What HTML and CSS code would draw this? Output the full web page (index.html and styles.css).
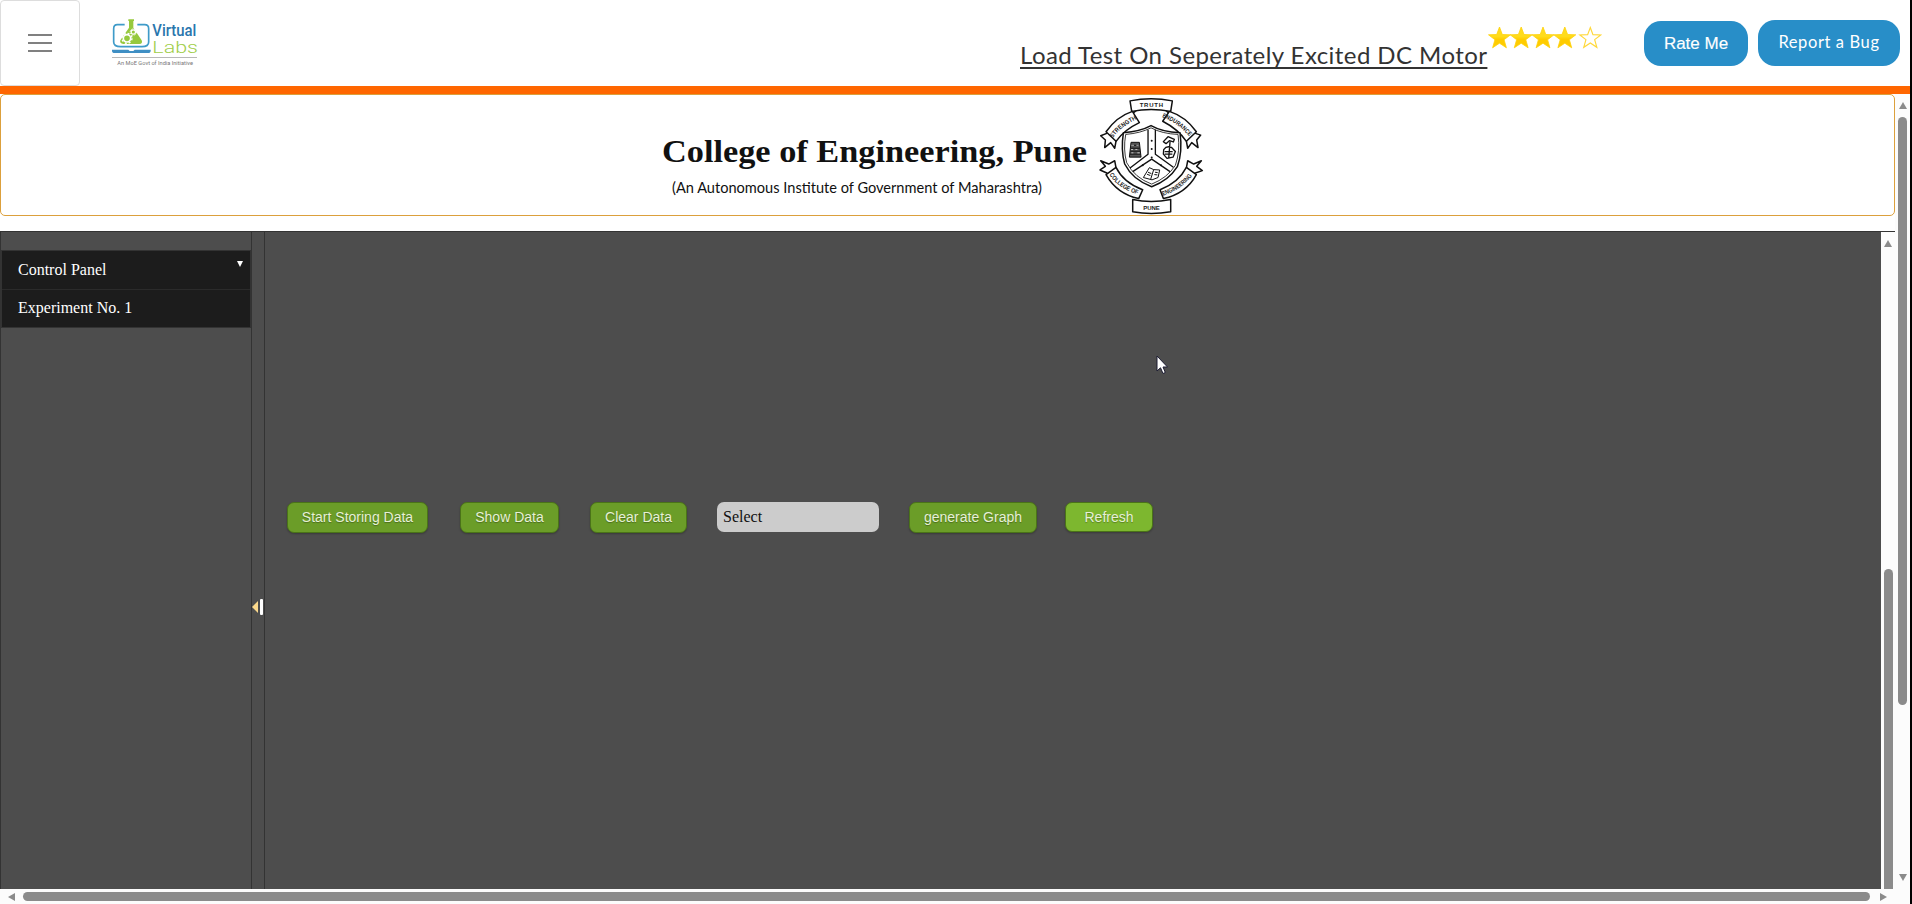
FILE: index.html
```html
<!DOCTYPE html>
<html lang="en">
<head>
<meta charset="utf-8">
<title>Virtual Labs</title>
<link rel="stylesheet" href="styles.css">
</head>
<body>
<div class="page">
  <header class="header">
    <button class="menu" aria-label="Menu"><span></span><span></span><span></span></button>
    <svg class="brand" viewBox="330 51 270 150">
      <path d="M374 74H352Q341 74 341 86V126Q341 140 362 140H426Q446 140 446 126V86Q446 74 434 74H412" fill="none" stroke="#3f9bc9" stroke-width="5"/>
      <path d="M385 58H402V63H400V83L425 121Q429 132 418 132H370Q358 131 361 121L387 83V63H385Z" fill="#96c93d"/>
      <circle cx="381" cy="115" r="11" fill="none" stroke="#fff" stroke-width="5"/>
      <circle cx="381" cy="115" r="15" fill="none" stroke="#fff" stroke-width="4" stroke-dasharray="6 5.8"/>
      <circle cx="400" cy="96" r="6.500" fill="none" stroke="#fff" stroke-width="3.500"/>
      <circle cx="400" cy="96" r="9.500" fill="none" stroke="#fff" stroke-width="3" stroke-dasharray="4 3.460"/>
      <path d="M336 149H385L389 153H400L404 149H452V152Q452 159 444 159H344Q336 159 336 152Z" fill="#3f8fc4"/>
      <text class="brand-virtual" x="457" y="109" textLength="132" lengthAdjust="spacingAndGlyphs">Virtual</text>
      <text class="brand-labs" x="457" y="158" textLength="137" lengthAdjust="spacingAndGlyphs">Labs</text>
      <path d="M336 172.500H591" stroke="#aaa" stroke-width="2.500"/>
      <text class="brand-tag" x="352" y="194" textLength="227" lengthAdjust="spacingAndGlyphs">An MoE Govt of India Initiative</text>
    </svg>
    <h1 class="title">Load Test On Seperately Excited DC Motor</h1>
    <svg class="stars" viewBox="0 0 114 24">
      <defs>
        <linearGradient id="gold" x2="0" y2="1"><stop offset=".45" stop-color="#ffdc1c"/><stop offset=".6" stop-color="#fc0"/></linearGradient>
        <path id="star" d="M0-11L2.800-3.500 11-3.200 4.600 1.700 6.900 9.800 0 5.200-6.900 9.800-4.600 1.700-11-3.200-2.800-3.500Z"/>
      </defs>
      <g fill="url(#gold)" stroke="#ffd20a" stroke-width=".8">
        <use href="#star" x="11.500" y="12"/><use href="#star" x="33.200" y="12"/><use href="#star" x="55" y="12"/><use href="#star" x="76.800" y="12"/>
      </g>
      <use href="#star" transform="translate(102.300 12) scale(.95)" fill="#fff" stroke="#ffd83a" stroke-width="1.200"/>
    </svg>
    <button class="pill rate">Rate Me</button>
    <button class="pill report">Report a Bug</button>
  </header>
  <div class="viewport">
    <main class="content">
      <section class="banner">
        <svg class="college" viewBox="650 95 560 120">
          <text class="college-name" x="662" y="162" textLength="425" lengthAdjust="spacingAndGlyphs">College of Engineering, Pune</text>
          <text class="college-sub" x="672" y="193" textLength="370" lengthAdjust="spacingAndGlyphs">(An Autonomous Institute of Government of Maharashtra)</text>
          <g transform="translate(1090.700 91) scale(.33333 .329)" fill="#fff" stroke="#111" stroke-width="4.500" stroke-linejoin="round">
            <path d="M138 58L126 68V50M224 58L236 68V50"/>
            <path d="M118 30Q181 17 245 30L240 62Q181 50 123 62Z"/>
            <path d="M50 128L30 136 44 149 42 172 60 157 72 174 76 152"/>
            <path d="M125 62Q78 78 46 124L76 153Q100 118 146 96Z"/>
            <path d="M312 128L330 134 318 149 322 172 303 157 291 174 287 152"/>
            <path d="M236 62Q285 78 317 124L287 153Q262 116 216 92Z"/>
            <path d="M50 250L28 240 44 229 30 212 54 222 72 212 76 234"/>
            <path d="M76 232Q98 278 156 300L144 327Q78 312 46 254Z"/>
            <path d="M312 250L335 242 318 229 332 212 309 222 291 212 287 234"/>
            <path d="M287 232Q264 278 208 300L218 327Q286 312 317 254Z"/>
            <path d="M126 330V367Q181 378 240 367V330Q181 342 126 330Z"/>
            <path d="M98 127Q150 122 181 105Q214 124 268 127Q276 184 260 230Q234 272 183 291Q126 270 102 222Q90 180 98 127Z"/>
            <path d="M105 132Q150 128 181 112Q214 130 262 132Q269 182 254 226Q230 264 183 283Q132 264 108 218Q97 178 105 132Z" stroke-width="2.500"/>
            <path d="M172 118V192L118 234M194 118V192L248 232M126 245L183 207 238 245" fill="none" stroke-width="4"/>
            <path d="M116 201L121 156H146L151 201ZM123 165H145M121 174H147M120 183H148M118 192H150" fill="#555" stroke-width="3"/>
            <path d="M122 165H130M137 165H144M121 178H127M134 178H140M122 188H128M140 188H147" stroke="#fff" stroke-width="2"/>
            <path d="M218 154L232 139 251 147 248 155 236 151 226 160ZM238 154L234 205M219 178Q227 166 242 171L254 184 247 201 229 205 218 192ZM222 184H246M222 192H245" stroke-width="4"/>
            <path d="M158 263L176 233 189 239 207 240 202 263 184 270ZM189 239L180 268M172 247L182 251M169 253L179 257M193 247L201 248M191 254L200 255" stroke-width="3"/>
            <g fill="#111" stroke="none"><circle cx="183" cy="151" r="3"/><circle cx="183" cy="176" r="3"/><circle cx="183" cy="202" r="3"/><circle cx="156" cy="226" r="3"/><circle cx="211" cy="226" r="3"/></g>
          </g>
          <g class="motto" transform="translate(1090.700 91) scale(.33333 .329)">
            <path id="m1" d="M66 144Q90 106 150 80" fill="none"/>
            <path id="m2" d="M214 79Q270 101 304 150" fill="none"/>
            <path id="m3" d="M56 254Q84 300 154 318" fill="none"/>
            <path id="m4" d="M216 318Q272 302 312 248" fill="none"/>
            <text x="147" y="49" textLength="70">TRUTH</text>
            <text class="arc"><textPath href="#m1" textLength="94" lengthAdjust="spacingAndGlyphs">STRENGTH</textPath></text>
            <text class="arc"><textPath href="#m2" textLength="102" lengthAdjust="spacingAndGlyphs">ENDURANCE</textPath></text>
            <text class="arc"><textPath href="#m3" textLength="106" lengthAdjust="spacingAndGlyphs">COLLEGE OF</textPath></text>
            <text class="arc"><textPath href="#m4" textLength="108" lengthAdjust="spacingAndGlyphs">ENGINEERING</textPath></text>
            <text x="158" y="361" textLength="49">PUNE</text>
          </g>
        </svg>
      </section>
      <section class="lab">
        <aside class="sidebar">
          <nav class="nav">
            <a class="nav-item">Control Panel<span class="caret"></span></a>
            <a class="nav-item">Experiment No. 1</a>
          </nav>
        </aside>
        <div class="splitter"><span class="arrow"></span><span class="grip"></span></div>
        <div class="stage">
          <div class="controls">
            <button class="btn start">Start Storing Data</button>
            <button class="btn show">Show Data</button>
            <button class="btn clear">Clear Data</button>
            <div class="select">Select</div>
            <button class="btn graph">generate Graph</button>
            <button class="btn refresh">Refresh</button>
          </div>
        </div>
        <div class="vbar inner"><span class="up"></span><span class="thumb"></span></div>
      </section>
      <div class="hbar"><span class="left"></span><span class="thumb"></span><span class="right"></span></div>
    </main>
    <div class="vbar outer"><span class="up"></span><span class="thumb"></span><span class="down"></span></div>
  </div>
  <svg class="cursor" viewBox="0 0 14 20"><path d="M1 1V16L4.500 12.800 7 18.500 9.300 17.500 7 12H11.500Z" fill="#fff" stroke="#1c1c33"/></svg>
</div>
</body>
</html>
```
FILE: styles.css
```css
* { box-sizing: border-box; }
body { margin: 0; background: #000; overflow: hidden; }
button { border: 0; margin: 0; padding: 0; white-space: nowrap; }
svg { display: block; flex: none; }

.page { position: relative; width: 1910px; height: 904px; background: #fff; display: flex; flex-direction: column; }

.header { height: 94px; flex: none; display: flex; align-items: flex-start; border-bottom: 8px solid #f60; }
.menu { width: 80px; height: 86px; flex: none; background: #fff; border: 1px solid #ddd; border-radius: 4px; display: flex; flex-direction: column; align-items: center; justify-content: center; gap: 6px; }
.menu span { width: 24px; height: 2px; background: #808080; }
.brand { width: 90px; height: 50px; margin: 17px 0 0 30px; }
.brand-virtual { font: 500 48px Roboto, sans-serif; fill: #2a76ad; }
.brand-labs { font: 300 52px Roboto, sans-serif; fill: #9fce4a; }
.brand-tag { font: 17px Roboto, sans-serif; fill: #777; }
.title { margin: 40px 0 0 820px; width: 468px; font: 400 24px/30px Lato, sans-serif; letter-spacing: .43px; color: #333; white-space: nowrap; text-decoration: underline; text-decoration-thickness: 2px; text-underline-offset: 3px; text-decoration-skip-ink: none; }
.stars { width: 114px; height: 24px; margin-top: 26px; }
.pill { background: #288ec8; color: #fff; border-radius: 17px; }
.rate { width: 104px; height: 45px; margin: 21px 0 0 42px; font: 17px "Liberation Sans", sans-serif; -webkit-text-stroke: .15px #fff; }
.report { width: 142px; height: 46px; margin: 20px 0 0 10px; padding-bottom: 2px; font: 16.500px Lato, sans-serif; letter-spacing: .6px; }

.viewport { flex: 1; display: flex; min-height: 0; }
.content { width: 1895px; display: flex; flex-direction: column; }
.banner { height: 122px; flex: none; border: 1px solid #dca03c; border-radius: 5px; padding-left: 649px; }
.college { width: 560px; height: 120px; }
.college-name { font: bold 31px "Liberation Serif", serif; fill: #111; }
.college-sub { font: 15px Lato, sans-serif; fill: #111; }
.motto text { font: bold 18px "Liberation Sans", sans-serif; fill: #222; }
.motto .arc { font-size: 19px; }

.lab { margin-top: 15px; height: 658px; flex: none; display: flex; background: #4d4d4d; border-top: 1px solid #333; }
.sidebar { width: 252px; padding-top: 18px; border: solid #333; border-width: 0 1px; }
.nav { display: flex; flex-direction: column; background: #1c1c1c; border: 1px solid #333; }
.nav-item { height: 38px; padding-left: 16px; display: flex; align-items: center; font: 16px "Liberation Serif", serif; color: #fff; }
.nav-item + .nav-item { border-top: 1px solid #2b2b2b; padding-bottom: 2px; }
.caret { margin: -12px 7px 0 auto; border: solid transparent; border-width: 6px 3.500px 0; border-top-color: #fff; }
.splitter { width: 13px; border-right: 1px solid #333; display: flex; align-items: center; gap: 2px; padding-top: 92px; }
.arrow { border: solid transparent; border-width: 6px 6px 6px 0; border-right-color: #fbd98c; }
.grip { width: 3px; height: 16px; background: #fff; border-radius: 1px; }
.stage { flex: 1; padding: 270px 0 0 22px; }
.controls { display: flex; align-items: flex-start; }
.btn { height: 31px; padding-bottom: 1px; background: #6b9d28; color: #e6f0d6; border: 1px solid #4a7318; border-radius: 7px; font: 14px "Liberation Sans", sans-serif; text-shadow: 0 1px 1px rgba(0,0,0,.3); box-shadow: 0 1px 2px rgba(0,0,0,.25); }
.start { width: 141px; }
.show { width: 99px; margin-left: 32px; }
.clear { width: 97px; margin-left: 31px; }
.select { width: 162px; height: 30px; margin: 0 0 0 30px; padding-left: 6px; border-radius: 7px; background: #ccc; color: #111; font: 16px/30px "Liberation Serif", serif; }
.graph { width: 128px; margin-left: 30px; }
.refresh { width: 88px; height: 30px; margin-left: 28px; background: #7db72f; }

.vbar { flex: none; background: #fcfcfc; display: flex; flex-direction: column; align-items: center; }
.vbar .thumb { width: 9px; background: #8b8b8b; border-radius: 5px; }
.up { border: solid transparent; border-width: 0 4.500px 7px; border-bottom-color: #8b8b8b; }
.down { border: solid transparent; border-width: 7px 4.500px 0; border-top-color: #8b8b8b; }
.inner { width: 14px; padding-top: 8px; }
.inner .thumb { flex: 1; margin-top: 322px; border-radius: 5px 5px 0 0; }
.outer { width: 15px; padding-top: 8px; }
.outer .thumb { height: 588px; margin-top: 8px; }
.outer .down { margin-top: 169px; }
.hbar { height: 15px; background: #fcfcfc; display: flex; align-items: center; padding-left: 8px; }
.hbar .thumb { width: 1847px; height: 9px; margin-left: 8px; background: #8b8b8b; border-radius: 5px; }
.left { border: solid transparent; border-width: 4.500px 7px 4.500px 0; border-right-color: #8b8b8b; }
.right { margin-left: 10px; border: solid transparent; border-width: 4.500px 0 4.500px 7px; border-left-color: #8b8b8b; }

/* Pointer floats over the stage */
.cursor { position: absolute; left: 1156px; top: 355px; width: 14px; height: 20px; }
```
